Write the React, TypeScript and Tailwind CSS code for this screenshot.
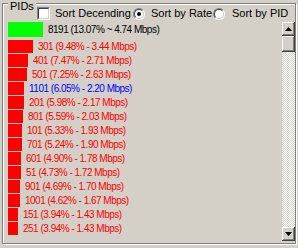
const rows = [
  { pid: '8191', pct: '13.07', mbps: '4.74', sep: '~', bar: '#00ff00', text: '#000000' },
  { pid: '301', pct: '9.48', mbps: '3.44', sep: '-', bar: '#ff0000', text: '#ff0000' },
  { pid: '401', pct: '7.47', mbps: '2.71', sep: '-', bar: '#ff0000', text: '#ff0000' },
  { pid: '501', pct: '7.25', mbps: '2.63', sep: '-', bar: '#ff0000', text: '#ff0000' },
  { pid: '1101', pct: '6.05', mbps: '2.20', sep: '-', bar: '#ff0000', text: '#0000ff' },
  { pid: '201', pct: '5.98', mbps: '2.17', sep: '-', bar: '#ff0000', text: '#ff0000' },
  { pid: '801', pct: '5.59', mbps: '2.03', sep: '-', bar: '#ff0000', text: '#ff0000' },
  { pid: '101', pct: '5.33', mbps: '1.93', sep: '-', bar: '#ff0000', text: '#ff0000' },
  { pid: '701', pct: '5.24', mbps: '1.90', sep: '-', bar: '#ff0000', text: '#ff0000' },
  { pid: '601', pct: '4.90', mbps: '1.78', sep: '-', bar: '#ff0000', text: '#ff0000' },
  { pid: '51', pct: '4.73', mbps: '1.72', sep: '-', bar: '#ff0000', text: '#ff0000' },
  { pid: '901', pct: '4.69', mbps: '1.70', sep: '-', bar: '#ff0000', text: '#ff0000' },
  { pid: '1001', pct: '4.62', mbps: '1.67', sep: '-', bar: '#ff0000', text: '#ff0000' },
  { pid: '151', pct: '3.94', mbps: '1.43', sep: '-', bar: '#ff0000', text: '#ff0000' },
  { pid: '251', pct: '3.94', mbps: '1.43', sep: '-', bar: '#ff0000', text: '#ff0000' },
]

const raised =
  'bg-[#d4d0c8] shadow-[inset_-1px_-1px_#404040,inset_1px_1px_#ffffff,inset_-2px_-2px_#808080,inset_2px_2px_#d4d0c8]'

function Checkbox() {
  return (
    <div className="w-[13px] h-[13px] border border-t-[#808080] border-l-[#808080] border-r-white border-b-white">
      <div className="w-full h-full bg-white border border-t-[#404040] border-l-[#404040] border-r-[#d4d0c8] border-b-[#d4d0c8]" />
    </div>
  )
}

function Radio({ on }: { on?: boolean }) {
  return (
    <div className="w-[12px] h-[12px] rounded-full border border-t-[#808080] border-l-[#808080] border-r-white border-b-white">
      <div className="w-full h-full rounded-full bg-white border border-t-[#404040] border-l-[#404040] border-r-[#d4d0c8] border-b-[#d4d0c8] flex items-center justify-center">
        {on && <div className="w-[4px] h-[4px] rounded-full bg-black" />}
      </div>
    </div>
  )
}

function Arrow({ down }: { down?: boolean }) {
  return (
    <svg width="7" height="4" viewBox="0 0 7 4">
      <polygon points={down ? '0,0 7,0 3.5,4' : '3.5,0 7,4 0,4'} fill="#000" />
    </svg>
  )
}

function Scrollbar() {
  return (
    <div className="w-[13px] h-full flex flex-col">
      <div className={`h-[14px] flex items-center justify-center ${raised}`}>
        <Arrow />
      </div>
      <div className={`h-[16px] ${raised}`} />
      <div className="flex-1 bg-[image:repeating-conic-gradient(#ffffff_0_25%,#d4d0c8_0_50%)] bg-[length:2px_2px]" />
      <div className={`h-[14px] flex items-center justify-center ${raised}`}>
        <Arrow down />
      </div>
    </div>
  )
}

export default function App() {
  return (
    <div className="relative w-[298px] h-[248px] overflow-hidden bg-[#d4d0c8] pt-[3px] pl-[2px] font-['Liberation_Sans',Arial,sans-serif] text-black">
      <div className="w-[294px] h-[241px] border border-[#808080] shadow-[inset_1px_1px_#ffffff,1px_1px_#ffffff] flex flex-col">
        {/* sort options */}
        <div className="mt-[3px] h-[13px] flex items-center text-[11px] leading-[13px]">
          <div className="ml-[34px] w-[96px] flex items-center gap-[5px]">
            <Checkbox />
            <span>Sort Decending</span>
          </div>
          <div className="w-[80px] flex items-center gap-[6px]">
            <Radio on />
            <span>Sort by Rate</span>
          </div>
          <div className="flex items-center gap-[7px]">
            <Radio />
            <span>Sort by PID</span>
          </div>
        </div>

        {/* list + scrollbar */}
        <div className="mt-[2px] h-[219px] flex">
          <div className="flex-1 pl-[5px] flex flex-col">
            {rows.map((r, i) => (
              <div
                key={r.pid + i}
                className={`flex items-center gap-[5px] ${i === 0 ? 'h-[17px] items-start' : 'h-[14px]'}`}
              >
                <div
                  className={i === 0 ? 'h-[15px]' : 'h-[13px]'}
                  style={{ width: Math.round(parseFloat(r.pct) * 2.65), background: r.bar }}
                />
                <span
                  className={`text-[10px] tracking-[-0.5px] whitespace-nowrap ${i === 0 ? 'leading-[15px]' : 'leading-[13px]'}`}
                  style={{ color: r.text }}
                >
                  {r.pid} ({r.pct}% {r.sep} {r.mbps} Mbps)
                </span>
              </div>
            ))}
          </div>
          <Scrollbar />
        </div>
      </div>

      <div className="absolute top-0 left-[8px] px-[2px] bg-[#d4d0c8] text-[11px] leading-[12px]">PIDs</div>
    </div>
  )
}
